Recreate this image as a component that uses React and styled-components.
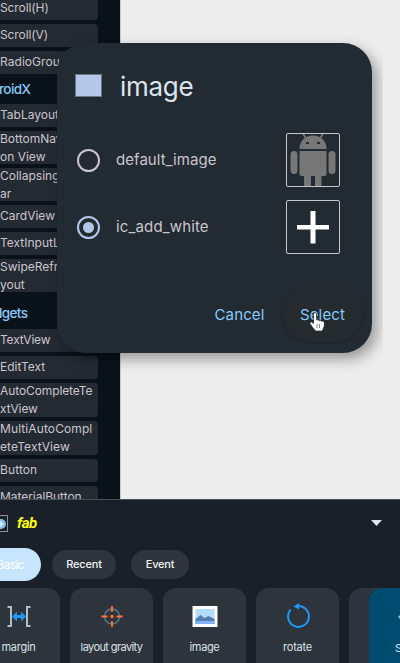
import React from 'react';
import styled, { createGlobalStyle } from 'styled-components';

const GlobalStyle = createGlobalStyle`
  * { box-sizing: border-box; }
  body { margin: 0; background: #ededed; font-family: Inter, Roboto, sans-serif; }
`;

const Screen = styled.main`
  position: relative;
  width: 400px;
  height: 663px;
  overflow: hidden;
  display: flex;
  flex-direction: column;
  background: #ededed;
`;

const Workspace = styled.div`
  height: 499px;
  flex: none;
  display: flex;
  overflow: hidden;
`;

const Palette = styled.aside`
  width: 121px;
  border-right: 1px solid #c8cbcd;
  background: #0a1219;
  overflow: hidden;
`;

const PaletteItem = styled.div`
  width: 98px;
  height: ${p => p.$h}px;
  margin-bottom: ${p => p.$gap ?? 4}px;
  display: flex;
  align-items: center;
  border-radius: 0 4px 4px 0;
  background: #232a31;
  color: #cbc4ce;
  font-size: 12px;
  line-height: 18px;
  letter-spacing: ${p => p.$ls ?? 0}px;
  white-space: pre;
  padding-bottom: ${p => (p.$h < 30 ? 1 : 0)}px;
`;

const PaletteHeading = styled.div`
  height: ${p => p.$h}px;
  padding-top: ${p => p.$drop ?? 0}px;
  display: flex;
  align-items: center;
  color: #86cafb;
  font-size: 13.5px;
  font-weight: 500;
  letter-spacing: -0.6px;
  text-indent: ${p => p.$shift}px;
`;

const Canvas = styled.div`
  flex: 1;
  background: #ededed;
`;

const DialogLayer = styled.div`
  position: absolute;
  left: 40px;
  top: 20px;
  width: 343px;
  height: 390px;
  padding: 23px 11px 0 17px;
  overflow: hidden;
`;

const Dialog = styled.section`
  width: 315px;
  height: 310px;
  padding: 0 9px 0 18px;
  display: flex;
  flex-direction: column;
  border-radius: 29px;
  background: #232b32;
  box-shadow: 5px 6px 14px rgba(0, 0, 0, 0.36);
`;

const DialogHeader = styled.header`
  height: 83px;
  display: flex;
  align-items: center;
  padding-top: 3px;
`;

const Swatch = styled.div`
  width: 27px;
  height: 23px;
  margin: 0 18px 1px 0;
  border: 1px solid #697889;
  background: #b5c7e9;
`;

const Title = styled.h1`
  margin: 0;
  padding-top: 1px;
  color: #dde3ed;
  font-size: 26px;
  font-weight: 400;
  line-height: 34px;
  letter-spacing: -0.3px;
`;

const Option = styled.div`
  height: 67px;
  display: flex;
  align-items: center;
`;

const Radio = styled.span`
  width: 23px;
  height: 23px;
  margin: 1px 16px 0 2px;
  display: grid;
  place-items: center;
  border: 2px solid ${p => (p.$on ? '#b5c7e9' : '#cbc4ce')};
  border-radius: 50%;
  &::after {
    content: '';
    width: 11px;
    height: 11px;
    border-radius: 50%;
    background: ${p => (p.$on ? '#b5c7e9' : 'transparent')};
  }
`;

const OptionLabel = styled.span`
  width: 170px;
  color: #cbc4ce;
  font-size: 15px;
  letter-spacing: ${p => p.$ls}px;
`;

const Thumb = styled.div`
  width: 54px;
  height: 54px;
  border: 1px solid #c5c9cc;
  border-radius: 2px;
  svg { display: block; }
`;

const Actions = styled.footer`
  height: 56px;
  margin-top: 26px;
  display: flex;
  align-items: center;
  justify-content: flex-end;
`;

const ActionButton = styled.button`
  width: 81px;
  height: 56px;
  padding: 0 ${p => (p.$hot ? 0 : 4)}px 0 0;
  border: 0;
  border-radius: 28px;
  color: #86cafb;
  background: ${p => (p.$hot ? '#242a2e' : 'transparent')};
  box-shadow: ${p => (p.$hot ? '0 1px 2px #1b2228, 0 -1px 1px #272e34' : 'none')};
  font: 400 15px Inter, sans-serif;
  letter-spacing: ${p => p.$ls}px;
`;

const Pointer = styled.svg`
  position: absolute;
  left: 308px;
  top: 311px;
`;

const Panel = styled.section`
  position: relative;
  height: 164px;
  border-top: 1px solid #44515d;
  background: #192027;
  overflow: hidden;
`;

const PanelHeader = styled.header`
  height: 47px;
  display: flex;
  align-items: center;
  padding: 0 18px 1px 0;
`;

const Preview = styled.div`
  width: 8px;
  height: 17px;
  display: flex;
  align-items: center;
  justify-content: flex-end;
  border: 1px solid #899199;
  border-left: 0;
  overflow: hidden;
  svg { flex: none; }
`;

const ViewName = styled.span`
  flex: 1;
  margin-left: 9px;
  color: #ffff18;
  font: italic 700 15px Roboto, sans-serif;
  letter-spacing: -0.5px;
`;

const Tabs = styled.nav`
  height: 34px;
  display: flex;
  align-items: center;
`;

const Tab = styled.button`
  width: ${p => p.$w}px;
  height: ${p => (p.$active ? 33 : 29)}px;
  margin-right: ${p => p.$gap}px;
  padding: 0 ${p => (p.$active ? 17 : 0)}px 0 0;
  border: 0;
  border-radius: ${p => (p.$active ? '0 17px 17px 0' : '15px')};
  background: ${p => (p.$active ? '#c8e5ff' : '#2d343b')};
  color: ${p => (p.$active ? '#ffffff' : '#f0f2f4')};
  font: ${p => (p.$active ? 400 : 500)} ${p => (p.$active ? 12 : 11)}px Inter, sans-serif;
  letter-spacing: ${p => (p.$active ? -0.6 : -0.2)}px;
  display: flex;
  align-items: center;
  justify-content: ${p => (p.$active ? 'flex-end' : 'center')};
  white-space: nowrap;
`;

const Cards = styled.div`
  margin-top: 7px;
  display: flex;
  gap: 10px;
  margin-left: -23px;
`;

const Card = styled.div`
  width: 83px;
  height: 92px;
  flex: none;
  display: flex;
  flex-direction: column;
  align-items: center;
  padding-top: 13px;
  border-radius: 13px;
  background: #2d343b;
  color: #dce2e9;
  font-size: 11px;
  letter-spacing: ${p => p.$ls ?? -0.25}px;
  white-space: nowrap;
  svg { margin: 0 0 8px; flex: none; }
`;

const Save = styled.button`
  position: absolute;
  left: 369px;
  top: 88px;
  width: 83px;
  height: 92px;
  padding: 20px 0 0 26px;
  display: flex;
  flex-direction: column;
  align-items: flex-start;
  border: 0;
  border-radius: 13px;
  background: #004b70;
  color: #c8e5ff;
  font: 11px Inter, sans-serif;
  svg { flex: none; margin: 0 0 15px 3px; }
`;

const CanvasAction = styled.span`
  position: absolute;
  left: 395px;
  top: 495px;
  width: 48px;
  height: 48px;
  border-radius: 15px;
  background: #b9dfd9;
`;

const Robot = () => (
  <svg width="52" height="52" viewBox="0 0 52 52" fill="#777">
    <path d="M12.500 15C12.500 7 18 1.500 26 1.500S39.500 7 39.500 15Z" />
    <path d="M15.500 -1l4 6M36.500 -1l-4 6" stroke="#777" strokeWidth="1.700" />
    <path d="M12.500 17h27v23q0 2-2 2h-3v8q0 4-3.500 4T28 50v-8h-4v8q0 4-3.500 4T17 50v-8h-2.500q-2 0-2-2Z" />
    <rect x="3.500" y="17" width="7" height="23" rx="3.500" />
    <rect x="41.500" y="17" width="7" height="23" rx="3.500" />
    <path d="M19 8h3v2h-3zM30 8h3v2h-3z" fill="#232a31" />
  </svg>
);

const Plus = () => (
  <svg width="52" height="52"><path d="M23.500 10h5v14h13.500v4.500H28.500v14h-5v-14H10V24h13.500Z" fill="#fff" /></svg>
);

const MarginIcon = () => (
  <svg width="30" height="31" viewBox="0 0 30 31" fill="none">
    <path d="M3.500 6H7v19H3.500M26.500 6H23v19h3.500" stroke="#b0bec5" strokeWidth="2" />
    <path d="M8 15.500l5-5v3.500h4v-3.500l5 5-5 5V17h-4v3.500Z" fill="#2196f3" />
  </svg>
);

const GravityIcon = () => (
  <svg width="30" height="31" viewBox="0 0 30 31" fill="none">
    <circle cx="15" cy="15.500" r="7.500" stroke="#607d8b" strokeWidth="1.300" />
    <path d="M15 5v6M15 20v6M4.500 15.500h6M19.500 15.500h6" stroke="#ff7043" strokeWidth="1.800" />
    <circle cx="15" cy="15.500" r="1.700" fill="#ff7043" />
  </svg>
);

const ImageIcon = () => (
  <svg width="30" height="31" viewBox="0 0 30 31">
    <path d="M2.500 5h25v21h-25z" fill="#fff" />
    <path d="M5.500 8h19v15h-19z" fill="#b3dcfb" />
    <path d="M5.500 18l5-4 4 3 4-2 6 3v5h-19z" fill="#547eae" />
    <path d="M5.500 20h19v3h-19z" fill="#82b1f5" />
  </svg>
);

const RotateIcon = () => (
  <svg width="30" height="31" viewBox="0 0 30 31" fill="none">
    <path d="M14 5.200A10.400 10.400 0 1 1 7.800 8.500" stroke="#2196f3" strokeWidth="2" />
    <path d="M16 2v6.500L10.500 5.500Z" fill="#2196f3" />
  </svg>
);

const ITEMS_TOP = [
  ['Scroll(H)', 23, 4, -0.1],
  ['Scroll(V)', 23, 4, -0.1],
  ['RadioGroup', 23, 0, 0.05],
];
const ITEMS_X = [
  ['TabLayout', 23, 4, 0],
  ['BottomNavigati\non View', 33, 4, 0],
  ['CollapsingToolb\nar', 33, 4, 0],
  ['CardView', 23, 4, 0],
  ['TextInputLayout', 23, 4, 0],
  ['SwipeRefreshLa\nyout', 33, 0, 0],
];
const ITEMS_WIDGETS = [
  ['TextView', 23, 4, -0.2],
  ['EditText', 23, 4, 0],
  ['AutoCompleteTe\nxtView', 34, 4, -0.1],
  ['MultiAutoCompl\neteTextView', 34, 4, 0.1],
  ['Button', 23, 4, 0.1],
  ['MaterialButton', 23, 4, -0.05],
];

const List = ({ items }) => items.map(([text, h, gap, ls]) => (
  <PaletteItem key={text} $h={h} $gap={gap} $ls={ls}>{text}</PaletteItem>
));

const PaletteScroll = styled.div`
  margin-top: -3px;
`;

export default function App() {
  return (
    <Screen>
      <GlobalStyle />
      <Workspace>
        <Palette>
          <PaletteScroll>
            <List items={ITEMS_TOP} />
            <PaletteHeading $h={30} $shift={-1}>roidX</PaletteHeading>
            <List items={ITEMS_X} />
            <PaletteHeading $h={37} $drop={5} $shift={-6}>dgets</PaletteHeading>
            <List items={ITEMS_WIDGETS} />
          </PaletteScroll>
        </Palette>
        <Canvas />
      </Workspace>
      <CanvasAction />
      <Panel>
        <PanelHeader>
          <Preview>
            <svg width="13" height="13"><circle cx="7" cy="7" r="5" fill="#82bdec" /><path d="M7 4v6M4 7h6" stroke="#fff" /></svg>
          </Preview>
          <ViewName>fab</ViewName>
          <svg width="11" height="6"><path d="M0 0h11L5.500 6Z" fill="#dde3ed" /></svg>
        </PanelHeader>
        <Tabs>
          <Tab $active $w={41} $gap={11}>Basic</Tab>
          <Tab $w={64} $gap={15}>Recent</Tab>
          <Tab $w={58} $gap={0}>Event</Tab>
        </Tabs>
        <Cards>
          <Card><MarginIcon />margin</Card>
          <Card $ls={-0.6}><GravityIcon />layout gravity</Card>
          <Card $ls={-0.35}><ImageIcon />image</Card>
          <Card><RotateIcon />rotate</Card>
          <Card />
        </Cards>
        <Save>
          <svg width="18" height="18"><path d="M0 9l3-3 3 3-3 3Z" fill="#82bdec" /></svg>
          Save
        </Save>
      </Panel>
      <DialogLayer>
        <Dialog>
          <DialogHeader><Swatch /><Title>image</Title></DialogHeader>
          <Option>
            <Radio /><OptionLabel $ls={0.05}>default_image</OptionLabel><Thumb><Robot /></Thumb>
          </Option>
          <Option>
            <Radio $on /><OptionLabel $ls={0.15}>ic_add_white</OptionLabel><Thumb><Plus /></Thumb>
          </Option>
          <Actions>
            <ActionButton $ls={0.15}>Cancel</ActionButton>
            <ActionButton $hot $ls={0.15}>Select</ActionButton>
          </Actions>
        </Dialog>
      </DialogLayer>
      <Pointer width="20" height="22" viewBox="0 0 20 22">
        <path d="M5.500 2.500Q7 .5 8.500 2.500V9q1.500-1 2.500.500 1.500-1 2.500.700 2-.700 2.800 1V15l-2 5H7.500L4 15.500 2 12.500q-.5-2 1.500-1.500l2 1.500Z" fill="#fff" stroke="#1b2025" strokeWidth=".7" />
        <path d="M9 13v4M11.500 13v4" stroke="#555" strokeWidth=".7" />
      </Pointer>
    </Screen>
  );
}
